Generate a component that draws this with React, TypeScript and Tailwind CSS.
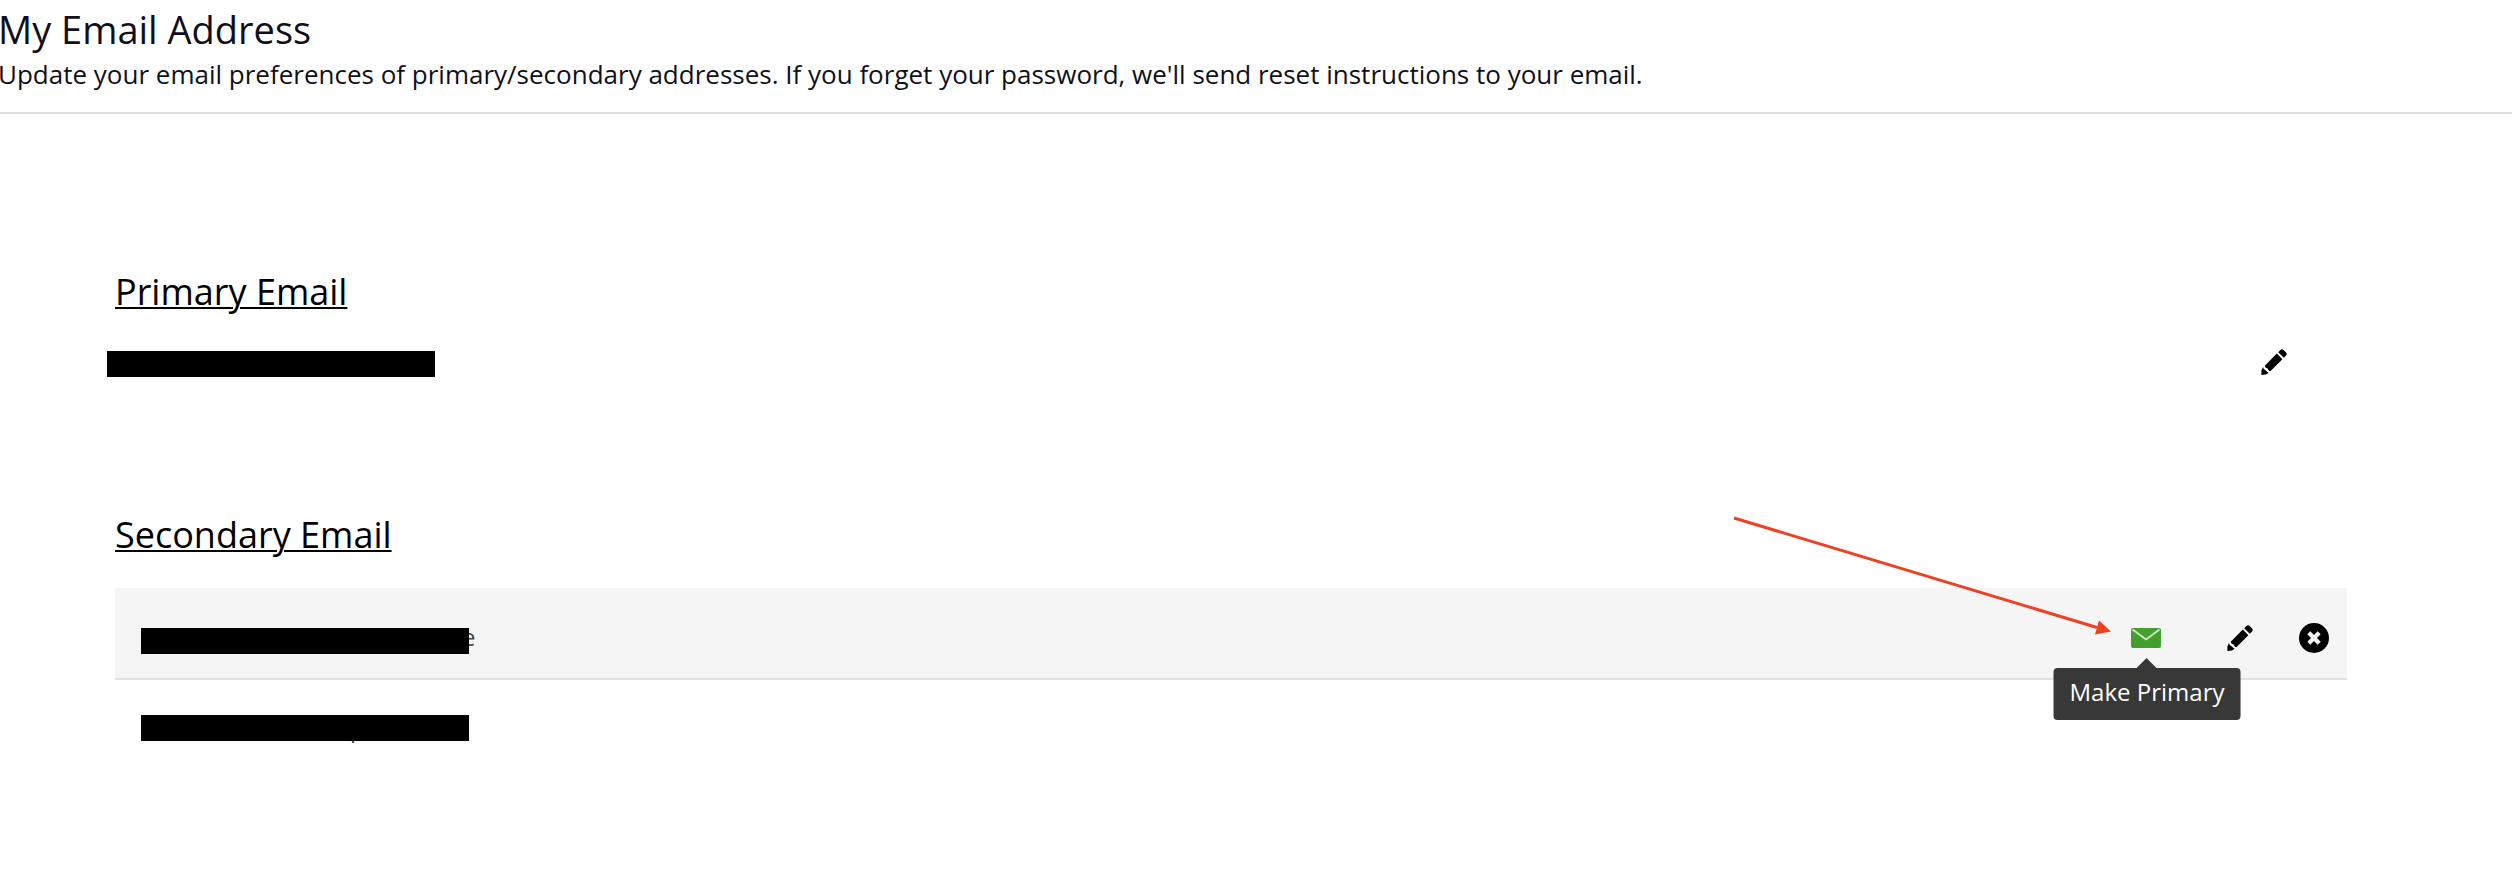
import type { ReactNode } from 'react';

function PencilIcon() {
  return (
    <svg viewBox="0 0 26 26" className="size-[26px]" fill="#000" aria-hidden="true">
      <path d="M17.2 3.2 L19.4 1 Q21 -0.5 22.6 1 L25 3.4 Q26.5 5 25 6.6 L22.8 8.8 Z" />
      <path d="M15.8 4.6 L21.4 10.2 L9.6 22 Q8.2 22.4 7.6 21.2 L6.6 19.4 L4.6 18.4 Q3.4 17.6 4 16.4 Z" />
      <path d="M2 18 Q2.4 20 3.8 20.8 L5 21.6 Q6 23.2 7.6 23.8 L5 25.6 L0.4 26 L0.4 21.4 Z" />
    </svg>
  );
}

function EnvelopeIcon() {
  return (
    <svg viewBox="0 0 30 20" className="h-5 w-[30px]" aria-hidden="true">
      <rect width="30" height="20" rx="2" fill="#43a02c" />
      <path d="M1.5 1.5 L15 11.5 L28.5 1.5" fill="none" stroke="#d3ebcb" strokeWidth="1.8" />
    </svg>
  );
}

function RemoveIcon() {
  return (
    <svg viewBox="0 0 30 30" className="size-[30px]" aria-hidden="true">
      <circle cx="15" cy="15" r="15" fill="#000" />
      <path d="M9.8 9.8 L20.2 20.2 M20.2 9.8 L9.8 20.2" stroke="#f5f5f5" strokeWidth="4.2" />
    </svg>
  );
}

function PointerArrow() {
  return (
    <svg
      viewBox="0 0 378 120"
      className="pointer-events-none absolute right-full bottom-0 mr-5 mb-3 h-[120px] w-[378px] max-w-none"
      aria-hidden="true"
    >
      <path d="M1 2 L364 111.5" stroke="#ee4023" strokeWidth="3" />
      <path d="M378 115.5 L366 104.5 L362 118.5 Z" fill="#ee4023" />
    </svg>
  );
}

function Redacted({ children }: { children?: ReactNode }) {
  return (
    <div className="relative h-[26px] w-[328px] shrink-0 text-[24px] text-[#444]">
      {children}
      <span className="absolute inset-0 bg-black" />
    </div>
  );
}

export default function App() {
  return (
    <div className="min-h-screen bg-white font-['Open_Sans','Noto_Sans',sans-serif] text-black">
      <header className="border-b-2 border-[#ddd] pb-[22px] text-[#10101a]">
        <div className="-ml-0.5">
          <h1 className="text-[38px] leading-[58px]">My Email Address</h1>
          <p className="text-[26px] leading-8">
            Update your email preferences of primary/secondary addresses. If you forget your password, we&apos;ll send
            reset instructions to your email.
          </p>
        </div>
      </header>

      <main className="pt-[153px] pr-[165px] pb-16 pl-[115px]">
        <section>
          <h2 className="text-[36px] leading-[50px] underline decoration-2 underline-offset-2">Primary Email</h2>
          <div className="-ml-2 flex h-[94px] items-center justify-between pr-[60px]">
            <Redacted />
            <button type="button" className="pb-1" aria-label="Edit primary email">
              <PencilIcon />
            </button>
          </div>
        </section>

        <section className="pt-[99px]">
          <h2 className="text-[36px] leading-[50px] underline decoration-2 underline-offset-2">Secondary Email</h2>
          <ul className="pt-7">
            <li className="flex h-[92px] items-center justify-between border-b-2 border-[#e2e2e2] bg-[#f5f5f5] pt-3 pr-[18px] pl-[26px]">
              <div className="pt-1">
                <Redacted>
                  <p className="pl-[321px] leading-[18px]">e</p>
                </Redacted>
              </div>
              <div className="flex items-center pb-0.5">
                <div className="relative mr-[66px] flex">
                  <button type="button" aria-label="Make Primary" aria-describedby="make-primary-tip">
                    <EnvelopeIcon />
                  </button>
                  <PointerArrow />
                  <div
                    id="make-primary-tip"
                    role="tooltip"
                    className="absolute top-full left-4 mt-5 -translate-x-1/2 rounded bg-[#383838] px-4 pt-1.5 pb-2.5 text-[24px] leading-9 whitespace-nowrap text-white"
                  >
                    <svg
                      viewBox="0 0 20 10"
                      className="absolute bottom-full left-1/2 h-2.5 w-5 -translate-x-1/2"
                      aria-hidden="true"
                    >
                      <path d="M0 10 L10 0 L20 10 Z" fill="#383838" />
                    </svg>
                    Make Primary
                  </div>
                </div>
                <button type="button" className="mr-[46px]" aria-label="Edit secondary email">
                  <PencilIcon />
                </button>
                <button type="button" aria-label="Remove secondary email">
                  <RemoveIcon />
                </button>
              </div>
            </li>
            <li className="flex h-24 items-center pl-[26px]">
              <Redacted>
                <p className="pl-[209px] leading-[26px]">p</p>
              </Redacted>
            </li>
          </ul>
        </section>
      </main>
    </div>
  );
}
